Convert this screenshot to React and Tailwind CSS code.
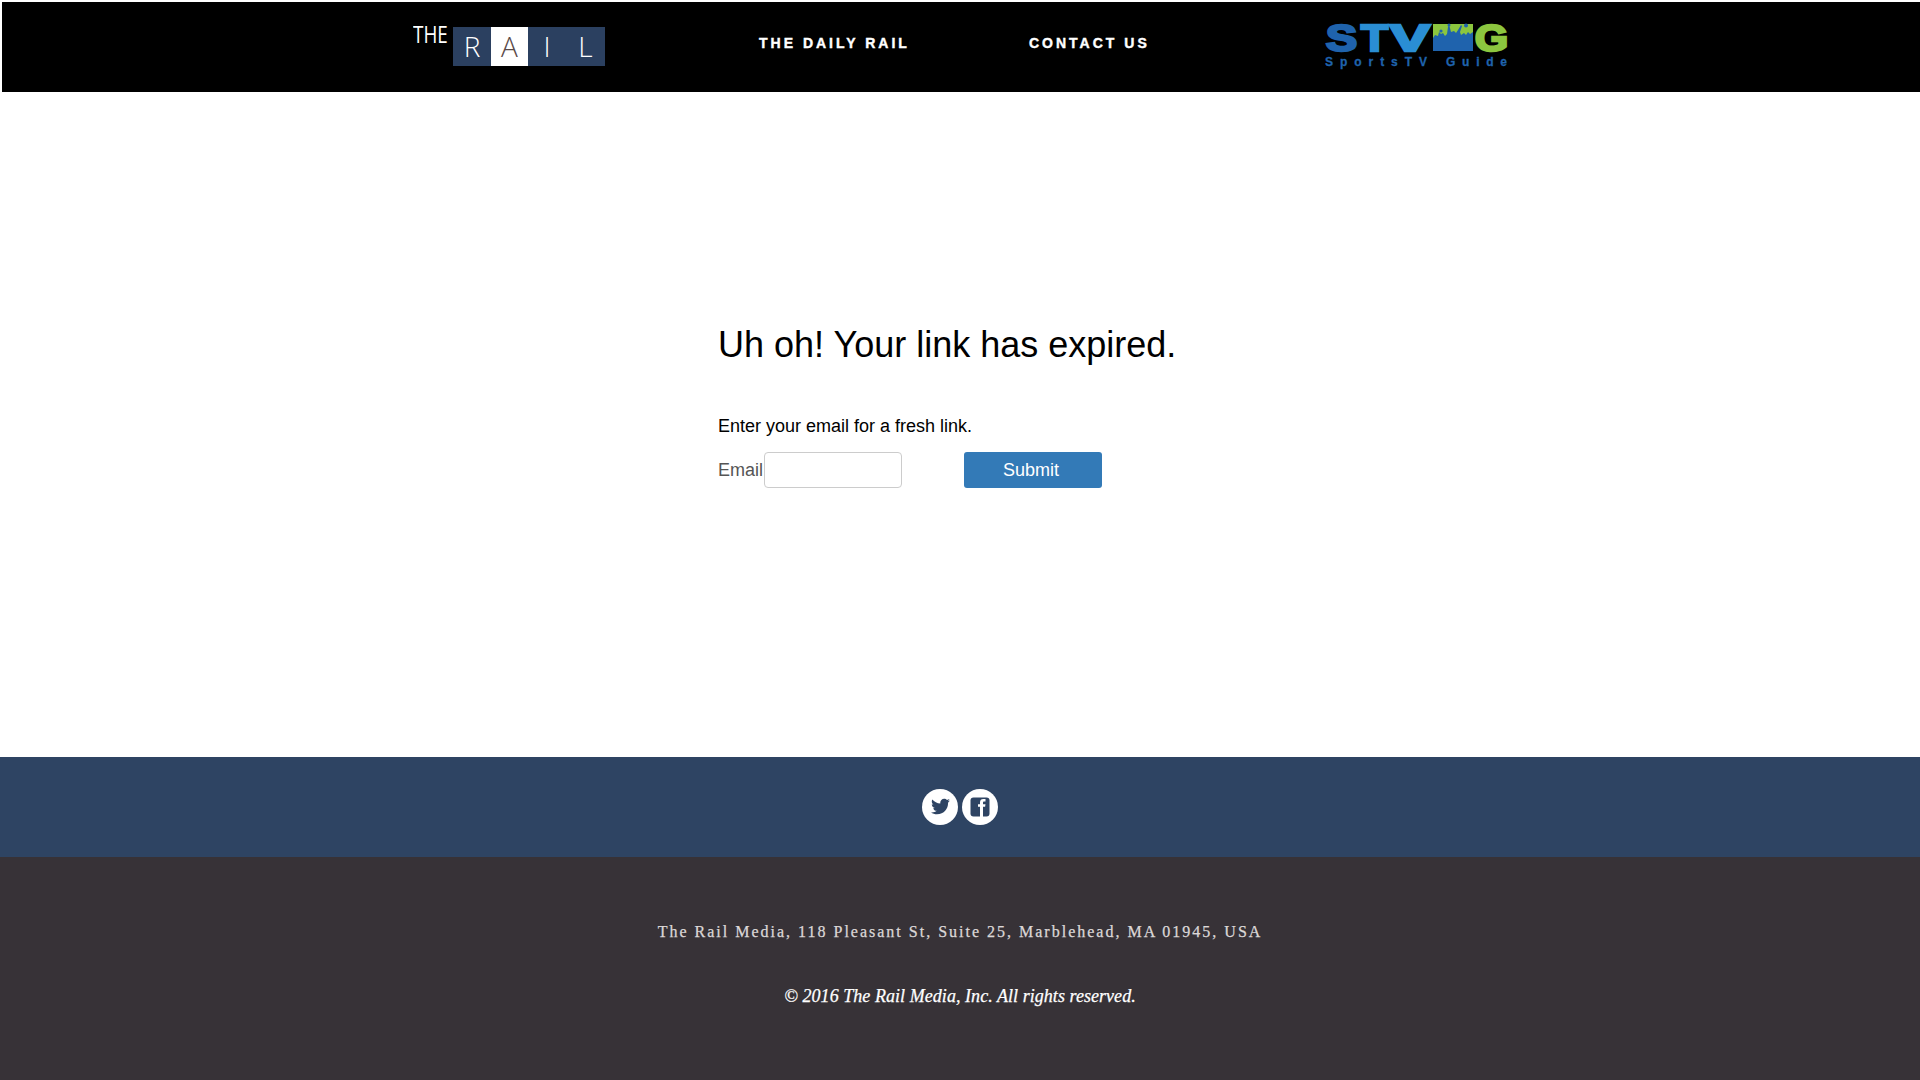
import React from "react";
import { FaTwitter } from "react-icons/fa";

function StvgLogo() {
  const f = { fontFamily: '"Liberation Sans", Arial, sans-serif', fontWeight: 700 };
  return (
    <svg width="190" height="50" viewBox="0 0 190 50" className="block overflow-visible">
      <text x="1" y="28.5" textLength="31" lengthAdjust="spacingAndGlyphs" fontSize="36" fill="#1f63ad" stroke="#1f63ad" strokeWidth="2.6" style={f}>S</text>
      <text x="36" y="28.5" textLength="27" lengthAdjust="spacingAndGlyphs" fontSize="36" fill="#2a8ed4" stroke="#2a8ed4" strokeWidth="2.4" style={f}>T</text>
      <text x="65" y="28.5" textLength="40" lengthAdjust="spacingAndGlyphs" fontSize="36" fill="#2a8ed4" stroke="#2a8ed4" strokeWidth="2.4" style={f}>V</text>
      <rect x="108" y="2" width="40" height="27" fill="#8cc63f" />
      <path d="M108 16L110 13L113 14L114 10L116 12L118 11L120 14L122 12L123 5L124 3L125 6L126 10L129 9L131 11L133 8L136 3L137 4L135 10L136 13L139 11L141 13L143 10L145 12L148 10V29H108Z" fill="#1f63ad" />
      <circle cx="116" cy="9" r="1.6" fill="#1f63ad" />
      <circle cx="124" cy="3" r="1.5" fill="#1f63ad" />
      <circle cx="141" cy="3.5" r="2" fill="#1f63ad" />
      <text x="150" y="28.5" textLength="33" lengthAdjust="spacingAndGlyphs" fontSize="36" fill="#8cc63f" stroke="#8cc63f" strokeWidth="2.6" style={f}>G</text>
      <text x="0" y="44" textLength="102" lengthAdjust="spacing" fontSize="12" fill="#1f63ad" stroke="#1f63ad" strokeWidth="0.3" style={f}>SportsTV</text>
      <text x="121" y="44" textLength="61" lengthAdjust="spacing" fontSize="12" fill="#1f63ad" stroke="#1f63ad" strokeWidth="0.3" style={f}>Guide</text>
    </svg>
  );
}

function FbIcon() {
  return (
    <svg width="20" height="20" viewBox="0 0 20 20" className="block">
      <rect x="0.5" y="0.5" width="19" height="19" rx="3" fill="#2e4463" />
      <path d="M10 20V9.8H8V7.2h2V5.4C10 3.2 11.2 2 13.3 2h2.2v2.6h-1.3c-.9 0-1.2.4-1.2 1.2v1.4h2.5l-.4 2.6h-2.1V20z" fill="#ffffff" />
    </svg>
  );
}

export default function App() {
  return (
    <div className="min-h-[1080px] bg-white font-['Liberation_Sans',Arial,sans-serif]">
      <div className="pt-[2px] pl-[2px]">
        <header className="h-[90px] bg-black flex items-start relative">
          <div className="ml-[411px] mt-[25px] w-[192px] flex items-start">
            <span className="font-['Open_Sans',sans-serif] font-normal text-[23px] leading-[24px] text-white w-[40px] scale-x-[0.82] origin-left whitespace-nowrap -mt-[5px]">THE</span>
            <div className="flex h-[39px] w-[152px] bg-[#2b4060] text-[28px] leading-[39px] font-['Open_Sans',sans-serif] font-light text-white text-center">
              <span className="w-[38px]">R</span>
              <span className="w-[37px] bg-white text-[#5a4a48]">A</span>
              <span className="w-[38px]">I</span>
              <span className="w-[39px]">L</span>
            </div>
          </div>
          <nav className="flex mt-[33px] ml-[154px] text-white font-bold text-[14px] leading-[16px] tracking-[3px] [-webkit-text-stroke:0.4px_white]">
            <a className="w-[270px]">THE DAILY RAIL</a>
            <a className="w-[296px]">CONTACT US</a>
          </nav>
          <div className="mt-[20px]"><StvgLogo /></div>
        </header>
      </div>
      <main className="h-[665px] pl-[718px] pt-[231px]">
        <h1 className="text-[36px] leading-[44px] text-black">Uh oh! Your link has expired.</h1>
        <p className="mt-[47px] text-[18px] leading-[24px] text-black">Enter your email for a fresh link.</p>
        <form className="mt-[14px] flex items-center text-[18px]">
          <label className="text-[#555555] w-[46px]">Email</label>
          <input className="w-[138px] h-[36px] rounded-[4px] border border-[#cccccc] bg-white" />
          <button type="button" className="ml-[62px] w-[138px] h-[36px] rounded-[3px] bg-[#337ab7] text-white pr-[4px]">Submit</button>
        </form>
      </main>
      <div className="h-[100px] bg-[#2e4463] flex items-center justify-center gap-[4px] pb-[1px]">
        <span className="w-[36px] h-[36px] rounded-full bg-white flex items-center justify-center text-[#2e4463]"><FaTwitter size={19} /></span>
        <span className="w-[36px] h-[36px] rounded-full bg-white flex items-center justify-center"><FbIcon /></span>
      </div>
      <footer className="h-[223px] bg-[#373237] pt-[63px] text-center font-['Liberation_Serif',serif]">
        <p className="text-[16px] leading-[24px] tracking-[2px] text-[#dcd8d8] [-webkit-text-stroke:0.25px_#dcd8d8]">The Rail Media, 118 Pleasant St, Suite 25, Marblehead, MA 01945, USA</p>
        <p className="mt-[40px] text-[18px] leading-[24px] italic text-white tracking-[0.05px] [-webkit-text-stroke:0.25px_white]">© 2016 The Rail Media, Inc. All rights reserved.</p>
      </footer>
    </div>
  );
}
